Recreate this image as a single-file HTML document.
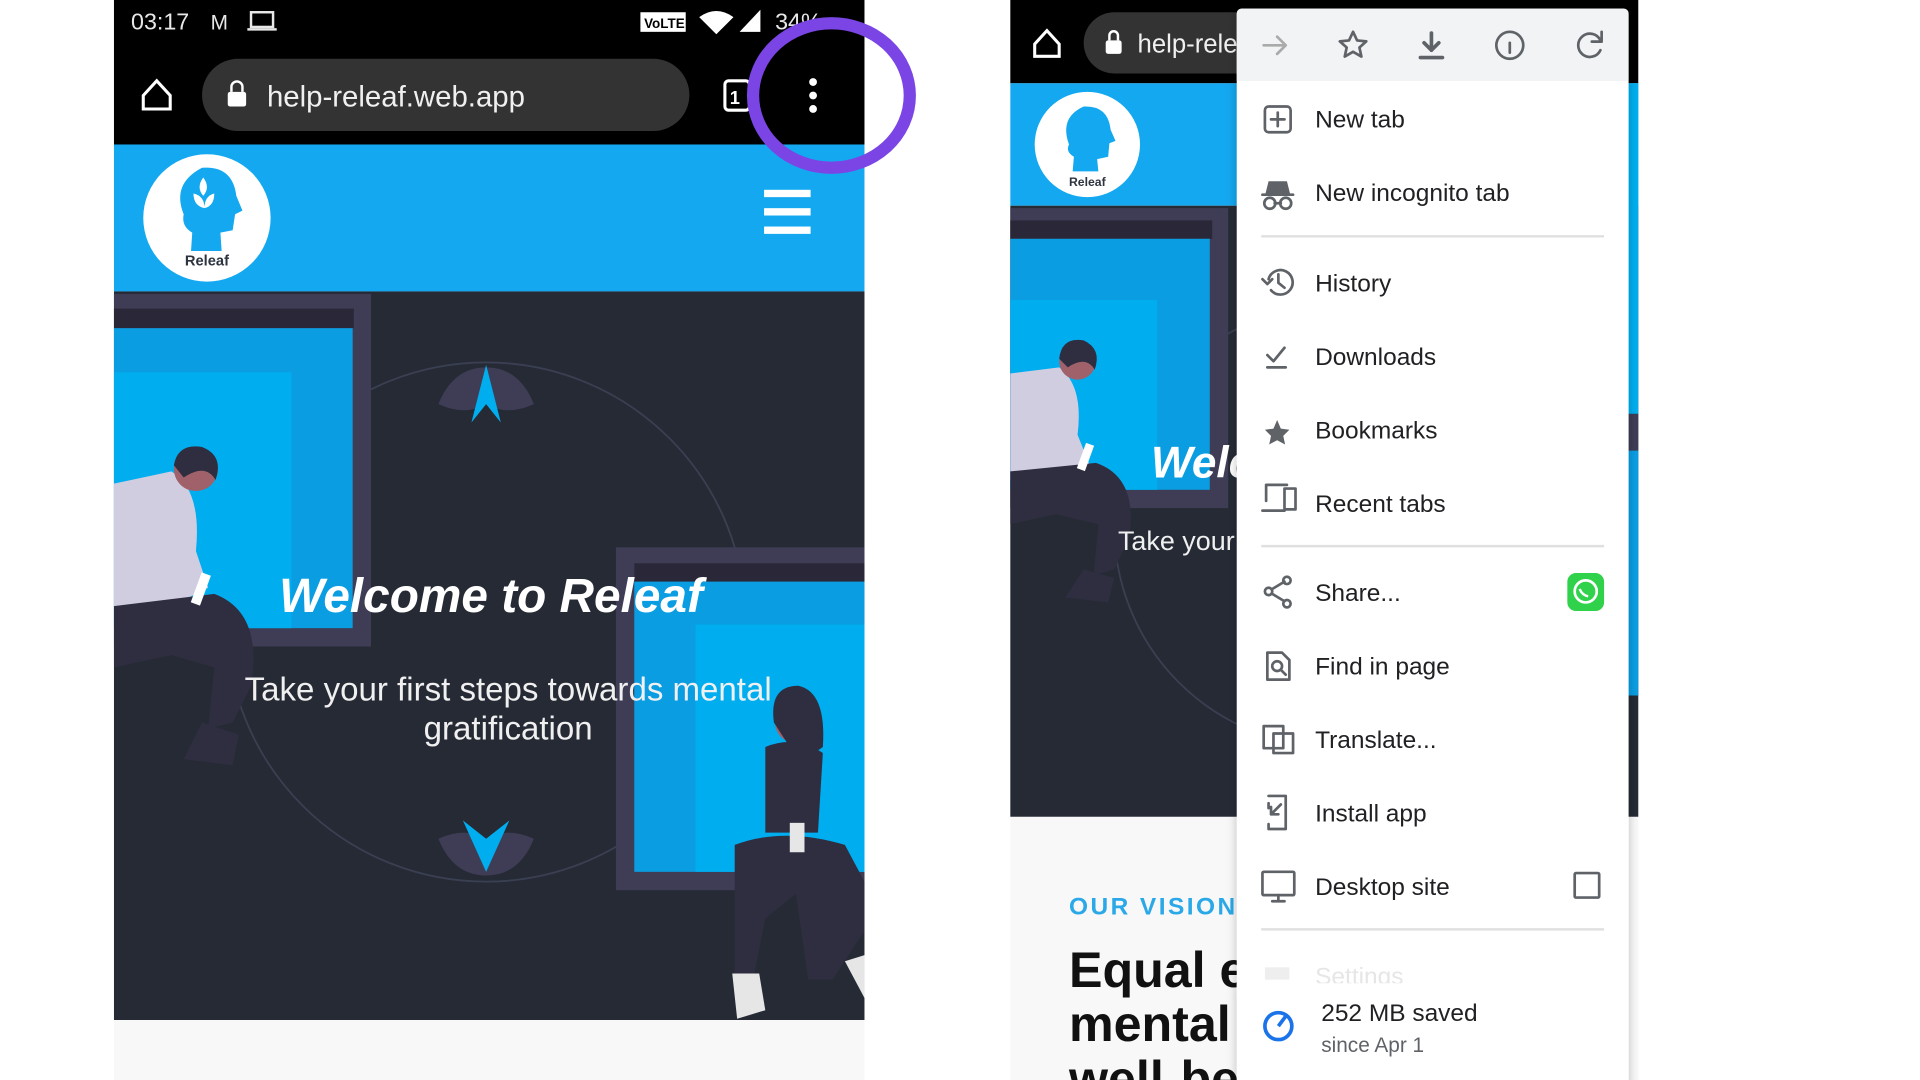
<!DOCTYPE html>
<html><head><meta charset="utf-8"><style>
html,body{margin:0;padding:0;background:#fff;width:1920px;height:1080px;overflow:hidden}
svg{display:block}
text{font-family:"Liberation Sans",sans-serif}
</style></head><body>
<svg width="1920" height="1080" viewBox="0 0 1568 882" preserveAspectRatio="none" xmlns="http://www.w3.org/2000/svg">
<defs>
<clipPath id="lp"><rect x="93" y="0" width="613" height="882"/></clipPath>
<clipPath id="rp"><rect x="825" y="0" width="513" height="882"/></clipPath>
<filter id="sh" x="-10%" y="-5%" width="120%" height="110%"><feDropShadow dx="0" dy="2" stdDeviation="4" flood-color="#000" flood-opacity="0.25"/></filter>
</defs>
<rect width="1568" height="882" fill="#fff"/>

<!-- LEFT PHONE -->
<g clip-path="url(#lp)">
<rect x="93" y="0" width="613" height="882" fill="#f8f8f8"/>
<rect x="93" y="0" width="613" height="118" fill="#000"/>
<text x="107" y="24" font-size="19" fill="#e8e8e8">03:17</text>
<text x="172" y="24" font-size="17" fill="#e8e8e8">M</text>
<rect x="205" y="10" width="18" height="12" fill="none" stroke="#e8e8e8" stroke-width="2"/><rect x="202" y="23" width="24" height="2" fill="#e8e8e8"/>
<rect x="523" y="10" width="37" height="16" fill="#fff"/><text x="526" y="23" font-size="11" font-weight="bold" fill="#000">VoLTE</text>
<path d="M571 14 Q585 4 599 14 L585 28 Z" fill="#fff"/>
<path d="M604 26 L621 8 L621 26 Z" fill="#fff"/>
<text x="633" y="24" font-size="19" fill="#e8e8e8">34%</text>
<path d="M117 78 L128 66 L139 78 L139 89 L117 89 Z" fill="none" stroke="#fff" stroke-width="2.5"/>
<rect x="165" y="48" width="398" height="59" rx="29.5" fill="#333"/>
<rect x="186" y="75" width="15" height="12" rx="2" fill="#fff"/><path d="M189 75 v-4 a4.5 4.5 0 0 1 9 0 v4" fill="none" stroke="#fff" stroke-width="2"/>
<text x="218" y="87" font-size="24" fill="#f0f0f0">help-releaf.web.app</text>
<rect x="592" y="66" width="20" height="24" rx="3" fill="none" stroke="#fff" stroke-width="2.5"/>
<text x="596" y="85" font-size="15" font-weight="bold" fill="#fff">1</text>
<circle cx="664" cy="67" r="3.2" fill="#fff"/><circle cx="664" cy="78" r="3.2" fill="#fff"/><circle cx="664" cy="89" r="3.2" fill="#fff"/>
<rect x="93" y="118" width="613" height="120" fill="#14a8f0"/>
<circle cx="169" cy="178" r="52" fill="#fff"/>
<path d="M150 175 Q140 150 165 137 Q190 135 193 160 L198 172 L192 175 L190 188 L180 190 L181 205 L156 205 L157 190 Q148 185 150 175 Z" fill="#14a8f0"/>
<path d="M166 145 q-6 8 0 15 q6 -7 0 -15 M158 158 q0 10 9 12 q0 -10 -9 -12 M175 158 q0 10 -8 12 q0 -10 8 -12" fill="#fff"/>
<text x="169" y="217" font-size="12" font-weight="bold" text-anchor="middle" fill="#2d3440">Releaf</text>
<rect x="624" y="155" width="38" height="6" fill="#fff"/><rect x="624" y="170" width="38" height="6" fill="#fff"/><rect x="624" y="185" width="38" height="6" fill="#fff"/>
<rect x="93" y="238" width="613" height="595" fill="#252a35"/>
<circle cx="397" cy="508" r="212" fill="none" stroke="#3a3f52" stroke-width="1.5"/>
<rect x="93" y="240" width="210" height="288" fill="#3f3d56"/>
<rect x="93" y="252" width="196" height="16" fill="#2a2838"/>
<rect x="93" y="268" width="195" height="245" fill="#0a9de2"/>
<rect x="93" y="304" width="145" height="209" fill="#00aeef"/>
<rect x="503" y="447" width="203" height="280" fill="#3f3d56"/>
<rect x="518" y="460" width="188" height="15" fill="#2a2838"/>
<rect x="518" y="475" width="188" height="237" fill="#0a9de2"/>
<rect x="568" y="510" width="138" height="202" fill="#00aeef"/>
<path d="M397 300 Q370 300 358 330 Q380 340 397 330 Q414 340 436 330 Q424 300 397 300Z" fill="#3f3d56"/>
<path d="M397 298 L385 345 L397 330 L409 345 Z" fill="#00aeef"/>
<path d="M397 715 Q370 715 358 685 Q380 675 397 685 Q414 675 436 685 Q424 715 397 715Z" fill="#3f3d56"/>
<path d="M397 712 L378 670 L397 685 L416 670 Z" fill="#00aeef"/>
<!-- man -->
<path d="M93 395 L140 385 Q165 400 160 450 L170 480 L150 490 L93 500 Z" fill="#d0cde1"/>
<circle cx="160" cy="383" r="18" fill="#a0616a"/>
<path d="M142 380 Q145 362 165 365 Q183 372 176 392 Q168 378 150 390Z" fill="#2f2e41"/>
<path d="M93 495 L175 485 Q215 500 205 560 L190 590 L170 595 L175 545 L140 535 L93 545 Z" fill="#2f2e41"/>
<path d="M165 590 L195 600 L190 625 L150 620 Z" fill="#2f2e41"/>
<rect x="160" y="468" width="8" height="26" fill="#fff" transform="rotate(20 164 481)"/>
<!-- woman -->
<circle cx="650" cy="590" r="17" fill="#a0616a"/>
<path d="M632 590 Q628 560 652 560 Q675 565 672 610 Q660 620 645 610Z" fill="#2f2e41"/>
<path d="M625 610 Q650 600 672 615 L668 680 L625 680 Z" fill="#2f2e41"/>
<path d="M600 690 Q640 675 690 690 L706 720 L706 760 L680 800 L660 800 L650 730 L625 750 L615 800 L600 800 Z" fill="#2f2e41"/>
<path d="M598 795 L620 795 L625 825 L602 832 Z" fill="#e6e6e6"/>
<path d="M690 785 L706 780 L706 815 Z" fill="#e6e6e6"/>
<rect x="645" y="672" width="12" height="24" fill="#e6e6e6"/>
<text x="401" y="500" font-size="39" font-weight="bold" font-style="italic" text-anchor="middle" fill="#fff">Welcome to Releaf</text>
<text x="415" y="572" font-size="27" text-anchor="middle" fill="#f0f0f0">Take your first steps towards mental</text>
<text x="415" y="604" font-size="27" text-anchor="middle" fill="#f0f0f0">gratification</text>
</g>
<ellipse cx="679" cy="78" rx="64" ry="59" fill="none" stroke="#7b45e6" stroke-width="10"/>

<!-- RIGHT PHONE -->
<g clip-path="url(#rp)">
<rect x="825" y="0" width="513" height="882" fill="#f8f8f8"/>
<rect x="825" y="0" width="513" height="68" fill="#000"/>
<path d="M845 36 L855 25 L865 36 L865 46 L845 46 Z" fill="none" stroke="#fff" stroke-width="2.5"/>
<rect x="885" y="10" width="160" height="50" rx="25" fill="#333"/>
<rect x="903" y="33" width="13" height="11" rx="2" fill="#fff"/><path d="M906 33 v-4 a3.5 3.5 0 0 1 7 0 v4" fill="none" stroke="#fff" stroke-width="2"/>
<text x="929" y="43" font-size="21" fill="#f0f0f0">help-releaf</text>
<rect x="825" y="68" width="513" height="100" fill="#14a8f0"/>
<circle cx="888" cy="118" r="43" fill="#fff"/>
<path d="M873 118 Q865 96 885 87 Q905 86 907 106 L911 115 L906 117 L905 128 L896 130 L897 140 L876 140 L877 128 Q870 124 873 118Z" fill="#14a8f0"/>
<text x="888" y="152" font-size="10" font-weight="bold" text-anchor="middle" fill="#2d3440">Releaf</text>
<rect x="825" y="168" width="513" height="499" fill="#252a35"/>
<circle cx="1090" cy="430" r="180" fill="none" stroke="#3a3f52" stroke-width="1.5"/>
<rect x="825" y="170" width="178" height="245" fill="#3f3d56"/>
<rect x="825" y="180" width="165" height="15" fill="#2a2838"/>
<rect x="825" y="195" width="163" height="205" fill="#0a9de2"/>
<rect x="825" y="245" width="120" height="155" fill="#00aeef"/>
<rect x="1325" y="68" width="13" height="270" fill="#00aeef"/>
<rect x="1325" y="338" width="13" height="30" fill="#3f3d56"/>
<rect x="1325" y="368" width="13" height="200" fill="#0a9de2"/>
<path d="M825 305 L865 300 Q885 315 880 355 L890 380 L870 388 L825 392 Z" fill="#d0cde1"/>
<circle cx="880" cy="295" r="15" fill="#a0616a"/>
<path d="M865 293 Q867 275 885 278 Q900 285 894 302 Q887 290 872 300Z" fill="#2f2e41"/>
<path d="M825 385 L895 378 Q930 390 922 440 L910 465 L893 470 L897 428 L862 420 L825 428 Z" fill="#2f2e41"/>
<path d="M885 465 L910 472 L905 492 L870 488 Z" fill="#2f2e41"/>
<rect x="883" y="362" width="7" height="22" fill="#fff" transform="rotate(20 886 373)"/>
<text x="940" y="390" font-size="36" font-weight="bold" font-style="italic" fill="#fff">Welcome</text>
<text x="913" y="449" font-size="22" fill="#f0f0f0">Take your first</text>
<text x="873" y="747" font-size="20" font-weight="bold" letter-spacing="2" fill="#2aa8e8">OUR VISION</text>
<text x="873" y="806" font-size="41" font-weight="bold" fill="#111">Equal emotional</text>
<text x="873" y="850" font-size="41" font-weight="bold" fill="#111">mental and</text>
<text x="873" y="895" font-size="41" font-weight="bold" fill="#111">well-being</text>
</g>

<!-- MENU -->
<g filter="url(#sh)"><rect x="1010" y="7" width="320" height="885" rx="4" fill="#fff"/></g>
<path d="M1010 11 a4 4 0 0 1 4 -4 h312 a4 4 0 0 1 4 4 v55 h-320 Z" fill="#f1f3f4"/>
<g fill="none" stroke="#5f6368" stroke-width="2.2" stroke-linecap="round" stroke-linejoin="round">
<path d="M1032 37 h18 M1043 30 l7 7 l-7 7" stroke="#aaa"/>
<path d="M1105 26 l3.3 7 7.5 .8 -5.6 5 1.6 7.4 -6.8 -3.9 -6.8 3.9 1.6 -7.4 -5.6 -5 7.5 -.8 Z"/>
<path d="M1169 27 v14 M1163 35 l6 6 6 -6 M1160 47 h18" stroke-width="3"/>
<circle cx="1233" cy="37" r="11"/><path d="M1233 35 v8"/>
<path d="M1307 33 a9.5 9.5 0 1 0 0 8 M1308 26 v8 h-8"/>
<rect x="1033" y="87" width="21" height="21" rx="3"/><path d="M1043.5 92 v11 M1038 97.5 h11"/>
<circle cx="1037" cy="166" r="4.5"/><circle cx="1050" cy="166" r="4.5"/><path d="M1041 166 h5 M1031 159 h25"/>
<path d="M1036 228 a10 10 0 1 1 2 9 M1044 224 v7 l5 4 M1031 228 l4 4 4 -4"/>
<path d="M1035 290 l5 5 9 -11 M1035 300 h15"/>
<path d="M1034 409 v-13 h17 M1031 417 h18 M1049 399 h9 v17 h-9 Z"/>
<circle cx="1051" cy="474" r="3"/><circle cx="1051" cy="493" r="3"/><circle cx="1036" cy="483" r="3"/><path d="M1039 481 l10 -6 M1039 485 l10 6"/>
<path d="M1035 533 h12 l6 6 v16 h-18 Z"/><circle cx="1043" cy="544" r="4"/><path d="M1046 547 l4 4"/>
<rect x="1032" y="593" width="16" height="18"/><rect x="1040" y="599" width="16" height="16"/>
<path d="M1036 650 h14 v27 h-14 v-4 M1036 660 v-4 M1046 657 l-8 8 M1038 659 v6 h6"/>
<rect x="1031" y="712" width="26" height="19" rx="1"/><path d="M1044 731 v5 M1039 736 h10"/>
<rect x="1286" y="713" width="20" height="20" rx="1"/>
</g>
<path d="M1036 350 l3 -7 3 7 7 1 -5 5 1.5 7 -6.5 -3.5 -6.5 3.5 1.5 -7 -5 -5 Z" fill="#5f6368" transform="translate(4 0)"/>
<path d="M1033 160 l3 -12 h15 l3 12 Z" fill="#5f6368"/>
<g fill="#202124" font-size="20">
<text x="1074" y="104">New tab</text>
<text x="1074" y="164">New incognito tab</text>
<text x="1074" y="238">History</text>
<text x="1074" y="298">Downloads</text>
<text x="1074" y="358">Bookmarks</text>
<text x="1074" y="418">Recent tabs</text>
<text x="1074" y="491">Share...</text>
<text x="1074" y="551">Find in page</text>
<text x="1074" y="611">Translate...</text>
<text x="1074" y="671">Install app</text>
<text x="1074" y="731">Desktop site</text>
<text x="1079" y="834">252 MB saved</text>
</g>
<text x="1074" y="804" font-size="20" fill="#e6e6e6">Settings</text>
<rect x="1010" y="803" width="320" height="12" fill="#fff"/>
<text x="1079" y="859" font-size="17" fill="#5f6368">since Apr 1</text>
<path d="M1033 790 h20 v10 h-20 Z" fill="#eee"/>
<g stroke="#e0e0e0" stroke-width="2"><path d="M1030 193 h280 M1030 446 h280 M1030 759 h280"/></g>
<rect x="1280" y="468" width="30" height="31" rx="7" fill="#2fd24a"/>
<circle cx="1295" cy="483" r="9" fill="none" stroke="#fff" stroke-width="2.2"/>
<path d="M1290 481 q2 5 7 6" fill="none" stroke="#fff" stroke-width="2"/>
<circle cx="1044" cy="838" r="11" fill="none" stroke="#1a73e8" stroke-width="3"/>
<path d="M1044 838 l6 -8" stroke="#1a73e8" stroke-width="3"/>
</svg>
</body></html>
